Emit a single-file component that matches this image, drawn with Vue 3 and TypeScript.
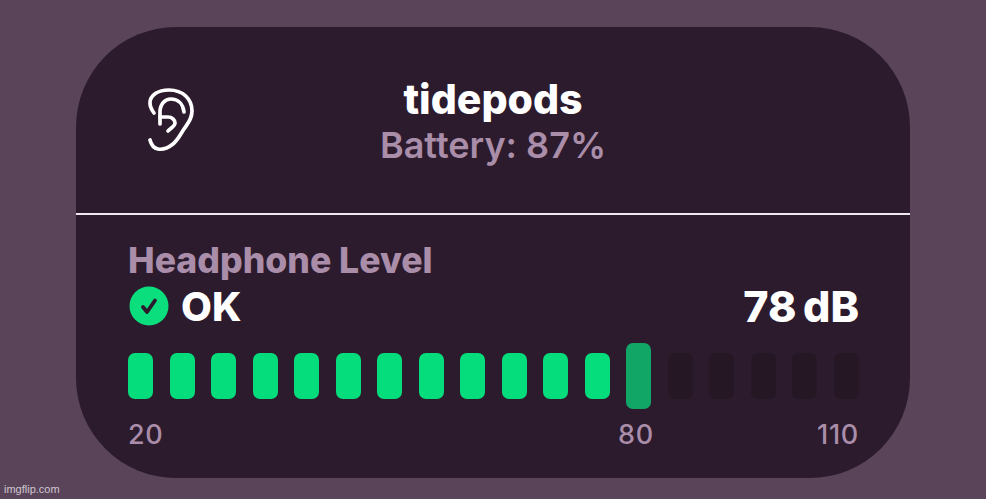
<script setup lang="ts">
type Bar = { kind: 'on' | 'now' | 'off' }

const bars: Bar[] = Array.from({ length: 18 }, (_, i) => ({
  kind: i < 12 ? 'on' : i === 12 ? 'now' : 'off'
}))
</script>

<template>
  <div class="page">
    <div class="card">
      <header class="head">
        <svg class="ear" viewBox="0 0 100 100" fill="none" stroke="#fff" stroke-width="3.7" stroke-linecap="round" stroke-linejoin="round">
          <path d="M34 43 C31 39 30 36 30 33 C30 25 38 20 49 20 C63 20 72 29 72 41 C72 49 68 53 64 59 C60 65 58 70 53 74 C48 78 43 80 38 79 C33 78 31 74 30 70" />
          <path d="M40 54 V42 C40 34 45 29 51 29 C58 29 63 34 64 42" />
          <path d="M40 47 H48 C52 47 55 50 55 53 C55 56 51 58 48 61" />
        </svg>
        <div class="title">tidepods</div>
        <div class="battery">Battery: 87%</div>
      </header>
      <div class="rule"></div>
      <section class="level">
        <div class="label">Headphone Level</div>
        <div class="status">
          <div class="ok">
            <svg class="check" viewBox="0 0 40 40">
              <circle cx="20" cy="20" r="19.5" fill="#0ade7d" />
              <path d="M14 21 L18 26 L26 14.5" fill="none" stroke="#2c1b2d" stroke-width="3.8" stroke-linecap="round" stroke-linejoin="round" />
            </svg>
            <span>OK</span>
          </div>
          <div class="db">78 dB</div>
        </div>
        <div class="meter">
          <div v-for="(bar, i) in bars" :key="i" class="bar" :class="bar.kind"></div>
        </div>
        <div class="scale">
          <span>20</span>
          <span class="mid">80</span>
          <span>110</span>
        </div>
      </section>
    </div>
    <div class="mark">imgflip.com</div>
  </div>
</template>

<style>
html, body { margin: 0; background: #5a445a; }
</style>

<style scoped>
.page {
  position: relative;
  width: 986px;
  height: 499px;
  box-sizing: border-box;
  padding: 27px 76px 21px;
  background: #5a445a;
  overflow: hidden;
  font-family: Inter, "Liberation Sans", sans-serif;
}
.card {
  height: 451px;
  background: #2c1b2d;
  border-radius: 100px;
  display: flex;
  flex-direction: column;
}
.head {
  position: relative;
  height: 186px;
  box-sizing: border-box;
  padding-top: 47px;
  text-align: center;
}
.ear {
  position: absolute;
  left: 44px;
  top: 43px;
  width: 100px;
  height: 100px;
}
.title {
  font-size: 41px;
  line-height: 50px;
  font-weight: 800;
  color: #fff;
}
.battery {
  font-size: 36px;
  line-height: 42px;
  font-weight: 600;
  color: #a98da9;
}
.rule {
  height: 2px;
  background: #efe9ef;
}
.level {
  padding: 26px 51px 0 52px;
}
.label {
  font-size: 35.6px;
  line-height: 40px;
  font-weight: 800;
  color: #a98da9;
}
.status {
  display: flex;
  justify-content: space-between;
  align-items: center;
  height: 44px;
  margin-top: 3px;
}
.ok {
  display: flex;
  align-items: center;
  gap: 12px;
  margin-left: 1px;
  font-size: 40px;
  font-weight: 800;
  color: #fff;
}
.check {
  width: 40px;
  height: 40px;
}
.db {
  font-size: 43px;
  font-weight: 800;
  word-spacing: -3px;
  color: #fff;
}
.meter {
  display: flex;
  justify-content: space-between;
  align-items: center;
  height: 66px;
  margin-top: 15px;
}
.bar {
  width: 25px;
  height: 46px;
  border-radius: 7px;
}
.on { background: #05dd7d; }
.now {
  height: 66px;
  background: #11a566;
}
.off { background: #261725; }
.scale {
  position: relative;
  display: flex;
  justify-content: space-between;
  margin-top: 10px;
  font-size: 27px;
  line-height: 32px;
  font-weight: 500;
  letter-spacing: 0.7px;
  color: #a98da9;
}
.mid {
  position: absolute;
  left: 490px;
}
.mark {
  position: absolute;
  left: 4px;
  bottom: 3px;
  font-family: "Liberation Sans", sans-serif;
  font-size: 11px;
  line-height: 13px;
  color: #cfc6cf;
}
</style>
